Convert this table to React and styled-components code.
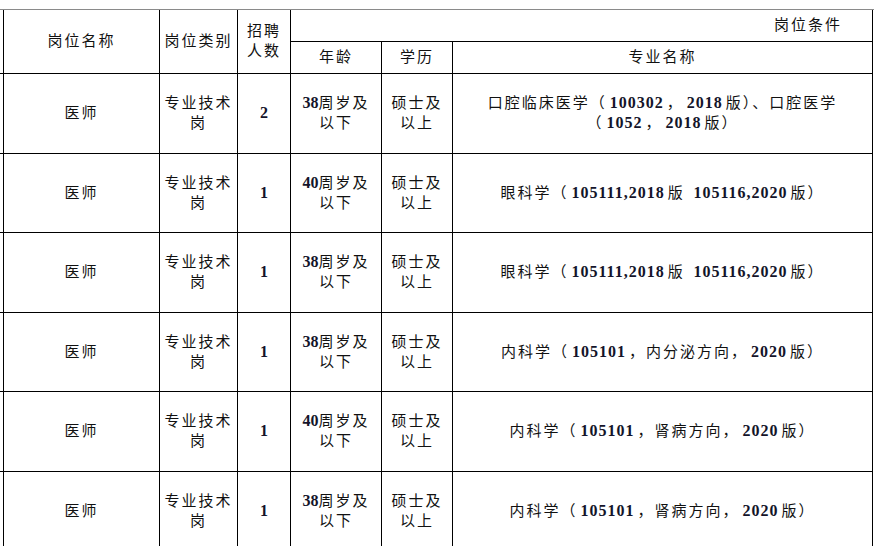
import React from "react"
import styled, { createGlobalStyle } from "styled-components"

const GlobalStyle = createGlobalStyle`
    html, body {
        margin: 0;
        padding: 0;
        background: #fff;
    }
    body {
        font-family: "Liberation Serif", "Noto Sans CJK SC", serif;
        color: #111;
    }
`

const Page = styled.div`
    width: 874px;
    height: 546px;
    overflow: hidden;
    padding-top: 9px;
    box-sizing: border-box;
`

const TopRule = styled.div`
    border-top: 1px solid #8a8a8a;
    overflow: hidden;
`

const Sheet = styled.table`
    border-collapse: collapse;
    table-layout: fixed;
    margin-left: -20px;
    width: 892px;
    font-size: 15px;
    line-height: 20px;
    letter-spacing: 2px;
`

const Cell = styled.td`
    border: 1px solid #000;
    padding: 0 3px;
    text-align: ${props => props.$align || "center"};
    vertical-align: middle;
    font-weight: normal;
    height: ${props => props.$h || 78}px;
    box-sizing: border-box;
    &:first-child {
        padding: 0;
    }
`

const HeadCell = styled(Cell).attrs({ as: "th" })`
    height: ${props => props.$h || 31}px;
`

const Conditions = styled(HeadCell)`
    border-top: none;
    border-right: 1px solid #000;
    text-align: right;
    padding-right: 30px;
`

const FirstHead = styled(HeadCell)`
    border-top: none;
`

const Num = styled.b`
    font-family: "Liberation Serif", serif;
    font-weight: bold;
    font-size: 16px;
    letter-spacing: ${props => (props.$spaced ? 1 : 0)}px;
    padding: 0 ${props => (props.$spaced ? 3 : 0)}px;
    color: #14142a;
`

const N = ({ children }) => <Num $spaced>{children}</Num>

const rows = [
    { age: "38", count: "2", major: <>口腔临床医学（<N>100302</N>，<N>2018</N>版）、口腔医学<br />（<N>1052</N>，<N>2018</N>版）</> },
    { age: "40", count: "1", major: <>眼科学（<N>105111,2018</N>版 <N>105116,2020</N>版）</> },
    { age: "38", count: "1", major: <>眼科学（<N>105111,2018</N>版 <N>105116,2020</N>版）</> },
    { age: "38", count: "1", major: <>内科学（<N>105101</N>，内分泌方向，<N>2020</N>版）</> },
    { age: "40", count: "1", major: <>内科学（<N>105101</N>，肾病方向，<N>2020</N>版）</> },
    { age: "38", count: "1", major: <>内科学（<N>105101</N>，肾病方向，<N>2020</N>版）</> },
]

const heights = [80, 79, 80, 79, 80, 80]

export default function App() {
    return (
        <Page>
            <GlobalStyle />
            <TopRule>
                <Sheet>
                    <colgroup>
                        <col style={{ width: 23 }} />
                        <col style={{ width: 156 }} />
                        <col style={{ width: 78 }} />
                        <col style={{ width: 53 }} />
                        <col style={{ width: 91 }} />
                        <col style={{ width: 71 }} />
                        <col style={{ width: 420 }} />
                    </colgroup>
                    <thead>
                        <tr>
                            <FirstHead rowSpan={2} $h={31} />
                            <FirstHead rowSpan={2}>岗位名称</FirstHead>
                            <FirstHead rowSpan={2}>岗位类别</FirstHead>
                            <FirstHead rowSpan={2}>招聘<br />人数</FirstHead>
                            <Conditions colSpan={3}>岗位条件</Conditions>
                        </tr>
                        <tr>
                            <HeadCell $h={32}>年龄</HeadCell>
                            <HeadCell $h={32}>学历</HeadCell>
                            <HeadCell $h={32}>专业名称</HeadCell>
                        </tr>
                    </thead>
                    <tbody>
                        {rows.map((r, i) => (
                            <tr key={i}>
                                <Cell $h={heights[i]} />
                                <Cell $h={heights[i]}>医师</Cell>
                                <Cell $h={heights[i]}>专业技术<br />岗</Cell>
                                <Cell $h={heights[i]}><Num>{r.count}</Num></Cell>
                                <Cell $h={heights[i]}><Num>{r.age}</Num>周岁及<br />以下</Cell>
                                <Cell $h={heights[i]}>硕士及<br />以上</Cell>
                                <Cell $h={heights[i]}>{r.major}</Cell>
                            </tr>
                        ))}
                    </tbody>
                </Sheet>
            </TopRule>
        </Page>
    )
}
